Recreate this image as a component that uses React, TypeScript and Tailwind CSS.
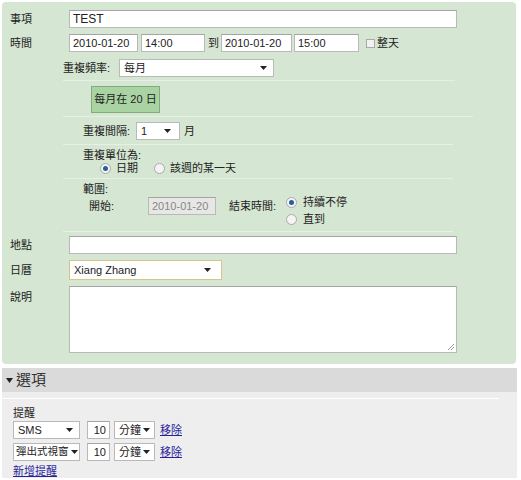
import React from 'react';

const font = "font-['Liberation_Sans','Noto_Sans_CJK_TC',sans-serif]";

const Arrow = () => (
  <svg width="7" height="4" viewBox="0 0 7 4" className="shrink-0">
    <path d="M0 0h7L3.5 4z" fill="#222" />
  </svg>
);

const Input = ({ value = '', className = '' }: { value?: string; className?: string }) => (
  <div
    className={`h-[18px] bg-white border border-[#b9b9b9] border-t-[#a4a4a4] flex items-center pl-[3px] text-[11px] text-[#222] whitespace-nowrap overflow-hidden ${className}`}
  >
    {value}
  </div>
);

const Select = ({ value, className = '', pad = 'pr-[6px]' }: { value: string; className?: string; pad?: string }) => (
  <div
    className={`h-[18px] bg-white border border-[#b9b9b9] flex items-center justify-between gap-[2px] pl-[4px] ${pad} text-[11px] text-[#222] whitespace-nowrap overflow-hidden ${className}`}
  >
    <span>{value}</span>
    <Arrow />
  </div>
);

const Radio = ({ on = false }: { on?: boolean }) => (
  <div className="w-[11px] h-[11px] rounded-full border border-[#a9a9a9] bg-[#f4f4f4] flex items-center justify-center shrink-0">
    {on && <div className="w-[5px] h-[5px] rounded-full bg-[#2d5c9c]" />}
  </div>
);

const Sep = ({ className = '' }: { className?: string }) => (
  <div className={`h-px bg-[#e6f0e4] ${className}`} />
);

const Link = ({ children }: { children: React.ReactNode }) => (
  <span className="text-[11px] text-[#2a1f9c] underline whitespace-nowrap">{children}</span>
);

export default function App() {
  return (
    <div className={`w-[521px] h-[480px] bg-white overflow-hidden ${font} text-[11px] text-[#222] whitespace-nowrap`}>
      {/* main green panel */}
      <div className="ml-[2px] mt-[2px] w-[514px] h-[362px] rounded-[4px] bg-[#d5e6d2] pt-[8px] pl-[8px]">
        <div className="flex items-center">
          <div className="w-[59px]">事項</div>
          <Input value="TEST" className="w-[388px] text-[12px]" />
        </div>

        <div className="flex items-center mt-[6px]">
          <div className="w-[59px]">時間</div>
          <Input value="2010-01-20" className="w-[69px]" />
          <Input value="14:00" className="w-[64px] ml-[3px]" />
          <span className="ml-[3px] mr-[2px]">到</span>
          <Input value="2010-01-20" className="w-[71px]" />
          <Input value="15:00" className="w-[65px] ml-[2px]" />
          <div className="w-[9px] h-[9px] border border-[#a9a9a9] bg-[#f2f2f2] ml-[7px]" />
          <span className="ml-[2px]">整天</span>
        </div>

        {/* repeat section */}
        <div className="ml-[53px] mt-[7px]">
          <div className="flex items-center">
            <div className="w-[56px]">重複頻率:</div>
            <Select value="每月" className="w-[155px]" />
          </div>
          <Sep className="mt-[3px] w-[392px]" />
          <div className="ml-[28px] mt-[5px] w-[69px] h-[27px] bg-[#a9d3a3] border border-[#82ab7e] flex items-center justify-center text-[11px]">
            每月在 20 日
          </div>
          <Sep className="mt-[3px] w-[410px]" />

          <div className="ml-[20px]">
            <div className="flex items-center mt-[5px]">
              <div className="w-[53px]">重複間隔:</div>
              <Select value="1" className="w-[44px]" pad="pr-[8px]" />
              <span className="ml-[4px]">月</span>
            </div>
            <Sep className="mt-[4px] w-[390px] -ml-[20px]" />
            <div className="mt-[4px] h-[12px] leading-[12px]">重複單位為:</div>
            <div className="flex items-center h-[12px] mt-[1px]">
              <div className="ml-[17px]">
                <Radio on />
              </div>
              <span className="ml-[5px]">日期</span>
              <div className="ml-[16px]">
                <Radio />
              </div>
              <span className="ml-[5px]">該週的某一天</span>
            </div>
            <Sep className="mt-[4px] w-[390px] -ml-[20px]" />
            <div className="mt-[4px] h-[12px] leading-[12px]">範圍:</div>
            <div className="flex items-start mt-[1px]">
              <div className="ml-[6px] w-[59px] h-[18px] mt-[1px] flex items-center">開始:</div>
              <Input value="2010-01-20" className="w-[68px] mt-[1px] bg-[#e7e7e5]! text-[#888]" />
              <div className="ml-[13px] w-[55px] h-[18px] mt-[1px] flex items-center">結束時間:</div>
              <div className="ml-[2px]">
                <div className="flex items-center h-[12px]">
                  <Radio on />
                  <span className="ml-[6px]">持續不停</span>
                </div>
                <div className="flex items-center h-[12px] mt-[5px]">
                  <Radio />
                  <span className="ml-[6px]">直到</span>
                </div>
              </div>
            </div>
            <Sep className="mt-[6px] w-[390px] -ml-[20px]" />
          </div>
        </div>

        <div className="flex items-center mt-[4px]">
          <div className="w-[59px]">地點</div>
          <Input className="w-[388px]" />
        </div>

        <div className="flex items-center mt-[6px]">
          <div className="w-[59px]">日曆</div>
          <Select value="Xiang Zhang" className="w-[153px] h-[20px] border-[#d6c489]" pad="pr-[10px]" />
        </div>

        <div className="flex items-start mt-[6px]">
          <div className="w-[59px] mt-[3px]">說明</div>
          <div className="w-[388px] h-[67px] bg-white border border-[#b9b9b9] border-t-[#a4a4a4] flex items-end justify-end p-[1px]">
            <svg width="8" height="8" viewBox="0 0 8 8">
              <path d="M1 7L7 1M4 7L7 4" stroke="#9a9a9a" strokeWidth="1" />
            </svg>
          </div>
        </div>
      </div>

      {/* options */}
      <div className="ml-[2px] mt-[4px] w-[515px]">
        <div className="h-[24px] bg-[#dadada] flex items-center pl-[4px]">
          <svg width="7" height="5" viewBox="0 0 7 5">
            <path d="M0 0h7L3.5 5z" fill="#222" />
          </svg>
          <span className="ml-[3px] text-[15px] text-[#333]">選項</span>
        </div>
        <div className="h-[86px] bg-[#eeeeee] pl-[11px]">
          <div className="pt-[6px]">
            <div className="h-px bg-white w-[497px] -ml-[11px]" />
          </div>
          <div className="mt-[8px] h-[12px] leading-[12px]">提醒</div>
          <div className="flex items-center mt-[2px]">
            <Select value="SMS" className="w-[67px] h-[17px]" />
            <Input value="10" className="w-[23px] h-[17px] ml-[7px] justify-end pr-[3px]" />
            <Select value="分鐘" className="w-[41px] h-[17px] ml-[4px]" pad="pr-[4px]" />
            <span className="ml-[5px]">
              <Link>移除</Link>
            </span>
          </div>
          <div className="flex items-center mt-[4px]">
            <Select value="彈出式視窗" className="w-[67px] h-[17px] pl-[2px]! text-[10.5px]!" pad="pr-[3px]" />
            <Input value="10" className="w-[23px] h-[17px] ml-[7px] justify-end pr-[3px]" />
            <Select value="分鐘" className="w-[41px] h-[17px] ml-[4px]" pad="pr-[4px]" />
            <span className="ml-[5px]">
              <Link>移除</Link>
            </span>
          </div>
          <div className="mt-[3px] leading-[14px]">
            <Link>新增提醒</Link>
          </div>
        </div>
      </div>
    </div>
  );
}
